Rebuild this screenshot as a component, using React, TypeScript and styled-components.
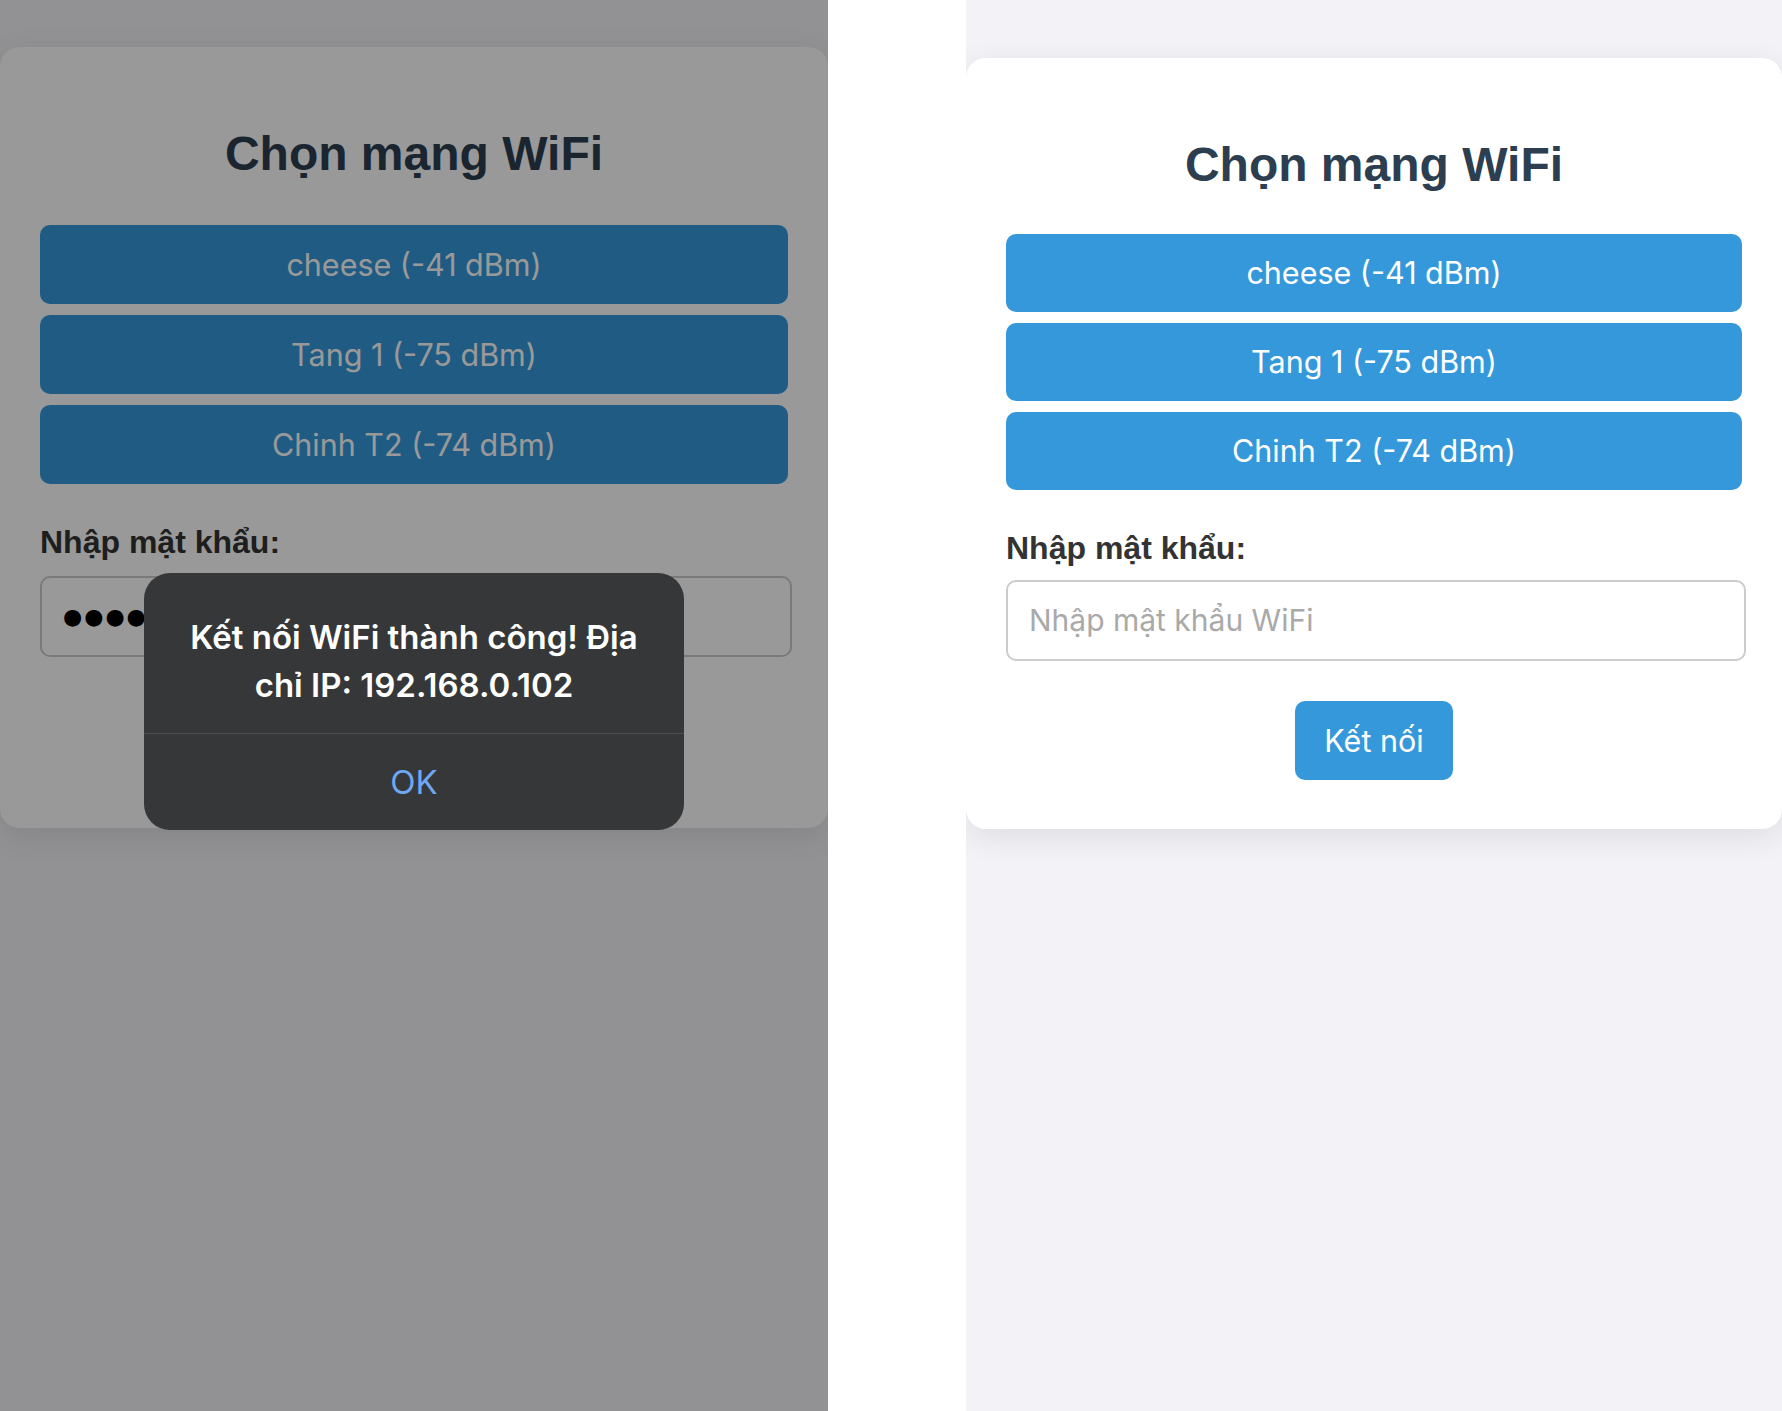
import React from "react";
import styled, { createGlobalStyle } from "styled-components";

const GlobalStyle = createGlobalStyle`
  html, body {
    margin: 0;
    padding: 0;
    background: #ffffff;
    overflow: hidden;
  }
  * { box-sizing: border-box; }
`;

const Page = styled.div`
  display: flex;
  width: 1782px;
  height: 1411px;
  background: #ffffff;
`;

const Screen = styled.div<{ $width: number; $top: number }>`
  position: relative;
  width: ${(p) => p.$width}px;
  height: 100%;
  flex: none;
  background: #f3f3f7;
  padding-top: ${(p) => p.$top}px;
  overflow: hidden;
`;

const Spacer = styled.div`
  width: 138px;
  flex: none;
  background: #ffffff;
`;

const Card = styled.div<{ $padBottom: number }>`
  width: 100%;
  background: #ffffff;
  border-radius: 20px;
  padding: 78px 40px ${(p) => p.$padBottom}px;
  box-shadow: 0 8px 32px rgba(0, 0, 0, 0.09);
  display: flex;
  flex-direction: column;
`;

const Title = styled.h2<{ $mb: number }>`
  margin: 0 0 ${(p) => p.$mb}px;
  font-family: "Liberation Sans", Arial, sans-serif;
  font-weight: 700;
  font-size: 48px;
  line-height: 57.6px;
  color: #2c3e50;
  text-align: center;
`;

const NetworkList = styled.div`
  display: flex;
  flex-direction: column;
  gap: 11px;
`;

const NetworkButton = styled.button<{ $h: number }>`
  height: ${(p) => p.$h}px;
  width: 100%;
  border: none;
  border-radius: 10px;
  background: #3498db;
  color: #ffffff;
  font-family: Inter, "Noto Sans", sans-serif;
  font-size: 30.5px;
  font-weight: 400;
  text-align: center;
  padding: 0;
`;

const FieldLabel = styled.label<{ $mt: number }>`
  display: block;
  margin-top: ${(p) => p.$mt}px;
  font-family: "Liberation Sans", Arial, sans-serif;
  font-weight: 700;
  font-size: 32px;
  color: #333333;
`;

const PasswordInput = styled.input<{ $mt: number; $masked?: boolean }>`
  display: block;
  margin-top: ${(p) => p.$mt}px;
  width: calc(100% + 4px);
  height: 81px;
  border: 2px solid #cccccc;
  border-radius: 10px;
  background: #ffffff;
  padding: 0 21px;
  font-family: ${(p) => (p.$masked ? '"DejaVu Sans"' : 'Inter, "Noto Sans"')}, sans-serif;
  font-size: ${(p) => (p.$masked ? 22 : 30)}px;
  letter-spacing: ${(p) => (p.$masked ? 2 : 0)}px;
  color: #000000;
  outline: none;
  &::placeholder {
    color: #a9a9a9;
  }
`;

const ConnectButton = styled.button`
  align-self: center;
  margin-top: 40px;
  width: 158px;
  height: 79px;
  border: none;
  border-radius: 10px;
  background: #3498db;
  color: #ffffff;
  font-family: Inter, "Noto Sans", sans-serif;
  font-size: 30.5px;
  padding: 0;
`;

const Dim = styled.div`
  position: absolute;
  inset: 0;
  background: rgba(0, 0, 0, 0.4);
  display: flex;
  align-items: center;
  justify-content: center;
  padding-bottom: 8px;
`;

const Alert = styled.div`
  width: 540px;
  background: #363739;
  border-radius: 26px;
  overflow: hidden;
  display: flex;
  flex-direction: column;
`;

const AlertMessage = styled.div`
  padding: 40px 36px 24px;
  font-family: Inter, "Noto Sans", sans-serif;
  font-weight: 600;
  font-size: 33px;
  line-height: 48px;
  color: #ffffff;
  text-align: center;
`;

const AlertAction = styled.button`
  height: 97px;
  border: none;
  border-top: 1px solid #4c4d50;
  background: transparent;
  color: #6fa8f2;
  font-family: Inter, "Noto Sans", sans-serif;
  font-size: 33px;
  font-weight: 400;
  padding: 0;
`;

const networks = ["cheese (-41 dBm)", "Tang 1 (-75 dBm)", "Chinh T2 (-74 dBm)"];

type WifiCardProps = {
  masked?: boolean;
  titleGap: number;
  buttonHeight: number;
  labelGap: number;
  inputGap: number;
  padBottom: number;
};

function WifiCard({ masked, titleGap, buttonHeight, labelGap, inputGap, padBottom }: WifiCardProps) {
  return (
    <Card $padBottom={padBottom}>
      <Title $mb={titleGap}>Chọn mạng WiFi</Title>
      <NetworkList>
        {networks.map((n) => (
          <NetworkButton key={n} $h={buttonHeight}>
            {n}
          </NetworkButton>
        ))}
      </NetworkList>
      <FieldLabel $mt={labelGap}>Nhập mật khẩu:</FieldLabel>
      {masked ? (
        <PasswordInput $mt={inputGap} $masked readOnly value="●●●●●●●●●●" />
      ) : (
        <PasswordInput $mt={inputGap} placeholder="Nhập mật khẩu WiFi" readOnly />
      )}
      <ConnectButton>Kết nối</ConnectButton>
    </Card>
  );
}

export default function App() {
  return (
    <>
      <GlobalStyle />
      <Page>
        <Screen $width={828} $top={47}>
          <WifiCard masked titleGap={42} buttonHeight={79} labelGap={40} inputGap={15} padBottom={52} />
          <Dim>
            <Alert>
              <AlertMessage>Kết nối WiFi thành công! Địa chỉ IP: 192.168.0.102</AlertMessage>
              <AlertAction>OK</AlertAction>
            </Alert>
          </Dim>
        </Screen>
        <Spacer />
        <Screen $width={816} $top={58}>
          <WifiCard titleGap={40} buttonHeight={78} labelGap={40} inputGap={13} padBottom={49} />
        </Screen>
      </Page>
    </>
  );
}
